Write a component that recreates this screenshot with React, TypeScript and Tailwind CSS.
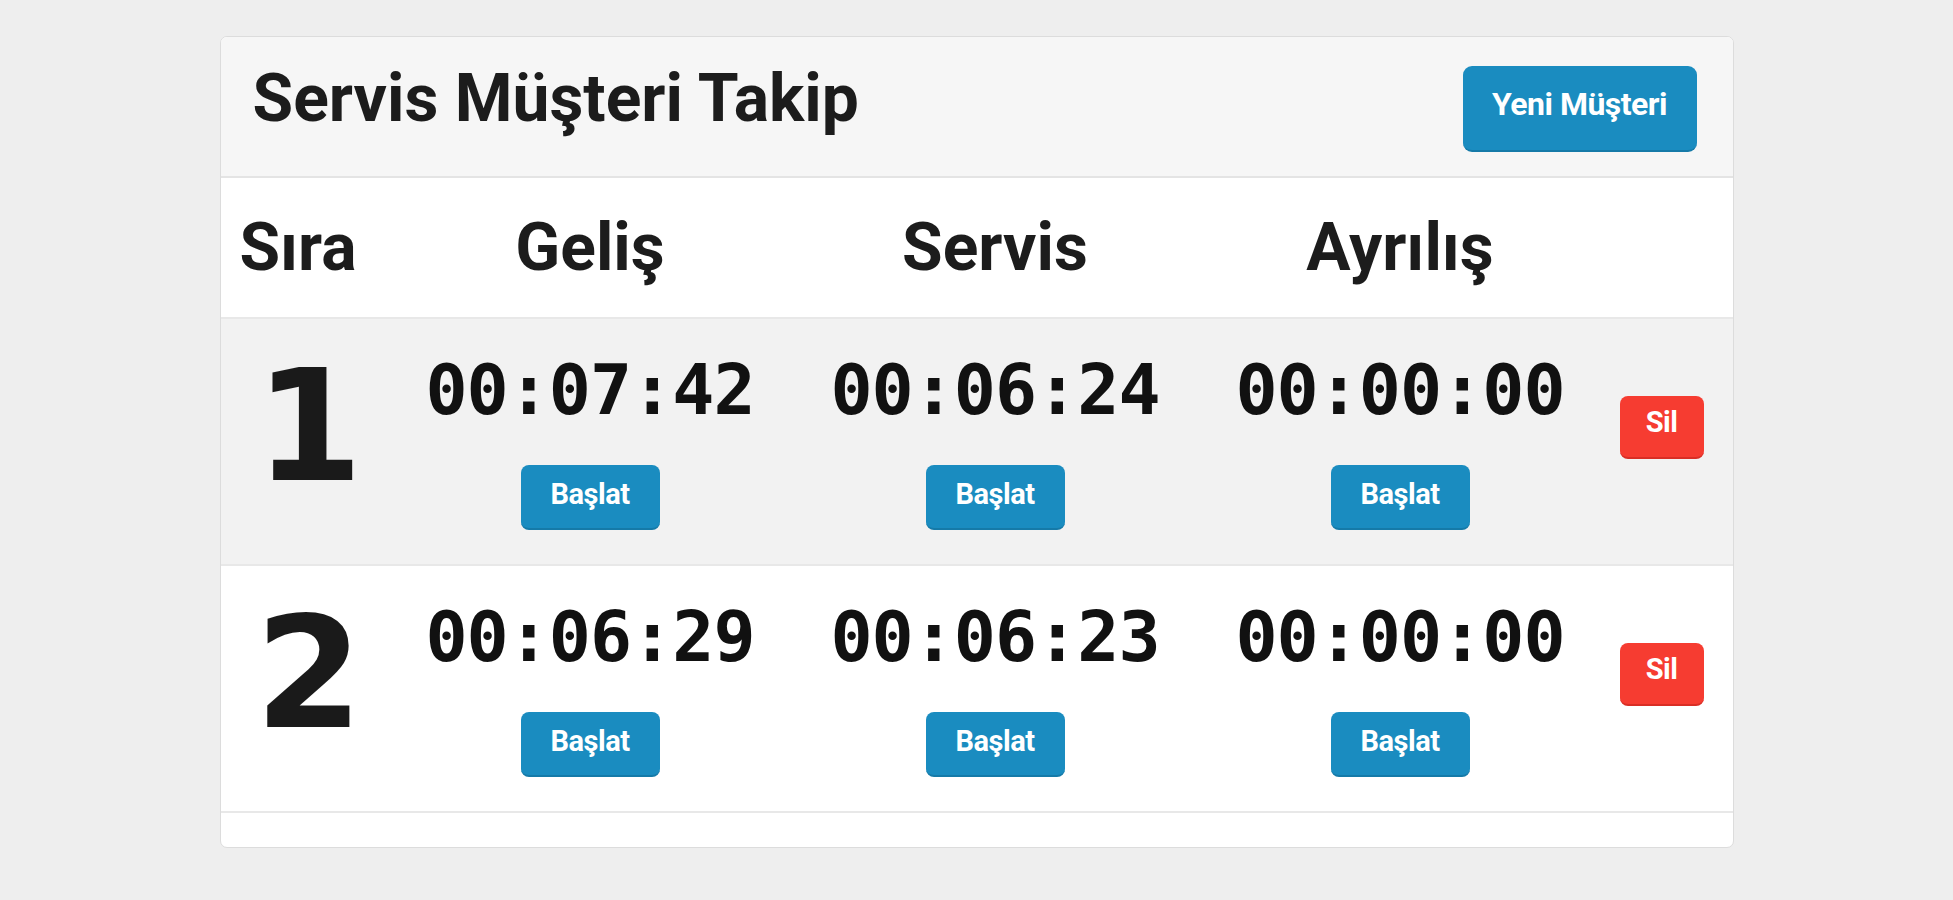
import React from 'react'

interface Row {
  no: number
  gelis: string
  servis: string
  ayrilis: string
}

const rows: Row[] = [
  { no: 1, gelis: '00:07:42', servis: '00:06:24', ayrilis: '00:00:00' },
  { no: 2, gelis: '00:06:29', servis: '00:06:23', ayrilis: '00:00:00' },
]

const sans = "font-['Roboto','Liberation_Sans',sans-serif]"

function TimeCell({ value }: { value: string }) {
  return (
    <div className="w-[405px] flex flex-col items-center pt-[36px]">
      <div className="font-['DejaVu_Sans_Mono',monospace] font-bold text-[70px] leading-none text-[#111] tracking-[-1px]">
        {value}
      </div>
      <button
        type="button"
        className={`${sans} mt-[40px] w-[139px] h-[65px] rounded-[8px] bg-[#1a8cc0] border-b-2 border-[#157aa8] text-white font-bold text-[29px] leading-none tracking-[-0.5px] pb-[4px]`}
      >
        Başlat
      </button>
    </div>
  )
}

export default function App() {
  return (
    <div className="min-h-[900px] bg-[#eeeeee] pt-[36px]">
      <div className="mx-auto w-[1514px] bg-white border border-[#dcdcdc] rounded-[7px] overflow-hidden text-[#1c1c1c]">
        {/* Header */}
        <div className="h-[141px] bg-[#f6f6f6] border-b-2 border-[#e4e4e4] flex items-start justify-between pl-[32px] pr-[36px] pt-[29px]">
          <h1 className={`${sans} font-bold text-[66px] leading-none`}>
            Servis Müşteri Takip
          </h1>
          <button
            type="button"
            className={`${sans} w-[234px] h-[86px] rounded-[9px] bg-[#1a8cc0] border-b-2 border-[#157aa8] text-white font-bold text-[32px] leading-none tracking-[-0.5px] pb-[8px]`}
          >
            Yeni Müşteri
          </button>
        </div>

        {/* Column headers */}
        <div className={`${sans} h-[141px] flex items-center border-b-2 border-[#e8e8e8] font-bold text-[66px] leading-none`}>
          <div className="w-[167px] text-center pr-[12px]">Sıra</div>
          <div className="w-[405px] text-center">Geliş</div>
          <div className="w-[405px] text-center">Servis</div>
          <div className="w-[405px] text-center">Ayrılış</div>
          <div className="flex-1" />
        </div>

        {/* Rows */}
        {rows.map((row, i) => (
          <div
            key={row.no}
            className={`h-[247px] flex border-b-2 border-[#e8e8e8] ${i % 2 === 0 ? 'bg-[#f2f2f2]' : 'bg-white'}`}
          >
            <div className="w-[167px] flex justify-center pt-[30px] pl-[10px]">
              <span className="font-['DejaVu_Sans',sans-serif] font-bold text-[155px] leading-none text-[#1a1a1a]">
                {row.no}
              </span>
            </div>
            <TimeCell value={row.gelis} />
            <TimeCell value={row.servis} />
            <TimeCell value={row.ayrilis} />
            <div className="flex-1 flex justify-center pt-[77px] pr-[12px]">
              <button
                type="button"
                className={`${sans} w-[84px] h-[63px] rounded-[8px] bg-[#f63c31] border-b-2 border-[#d92e25] text-white font-bold text-[29px] leading-none tracking-[-0.5px] pb-[8px]`}
              >
                Sil
              </button>
            </div>
          </div>
        ))}

        {/* Footer */}
        <div className="h-[34px]" />
      </div>
    </div>
  )
}
